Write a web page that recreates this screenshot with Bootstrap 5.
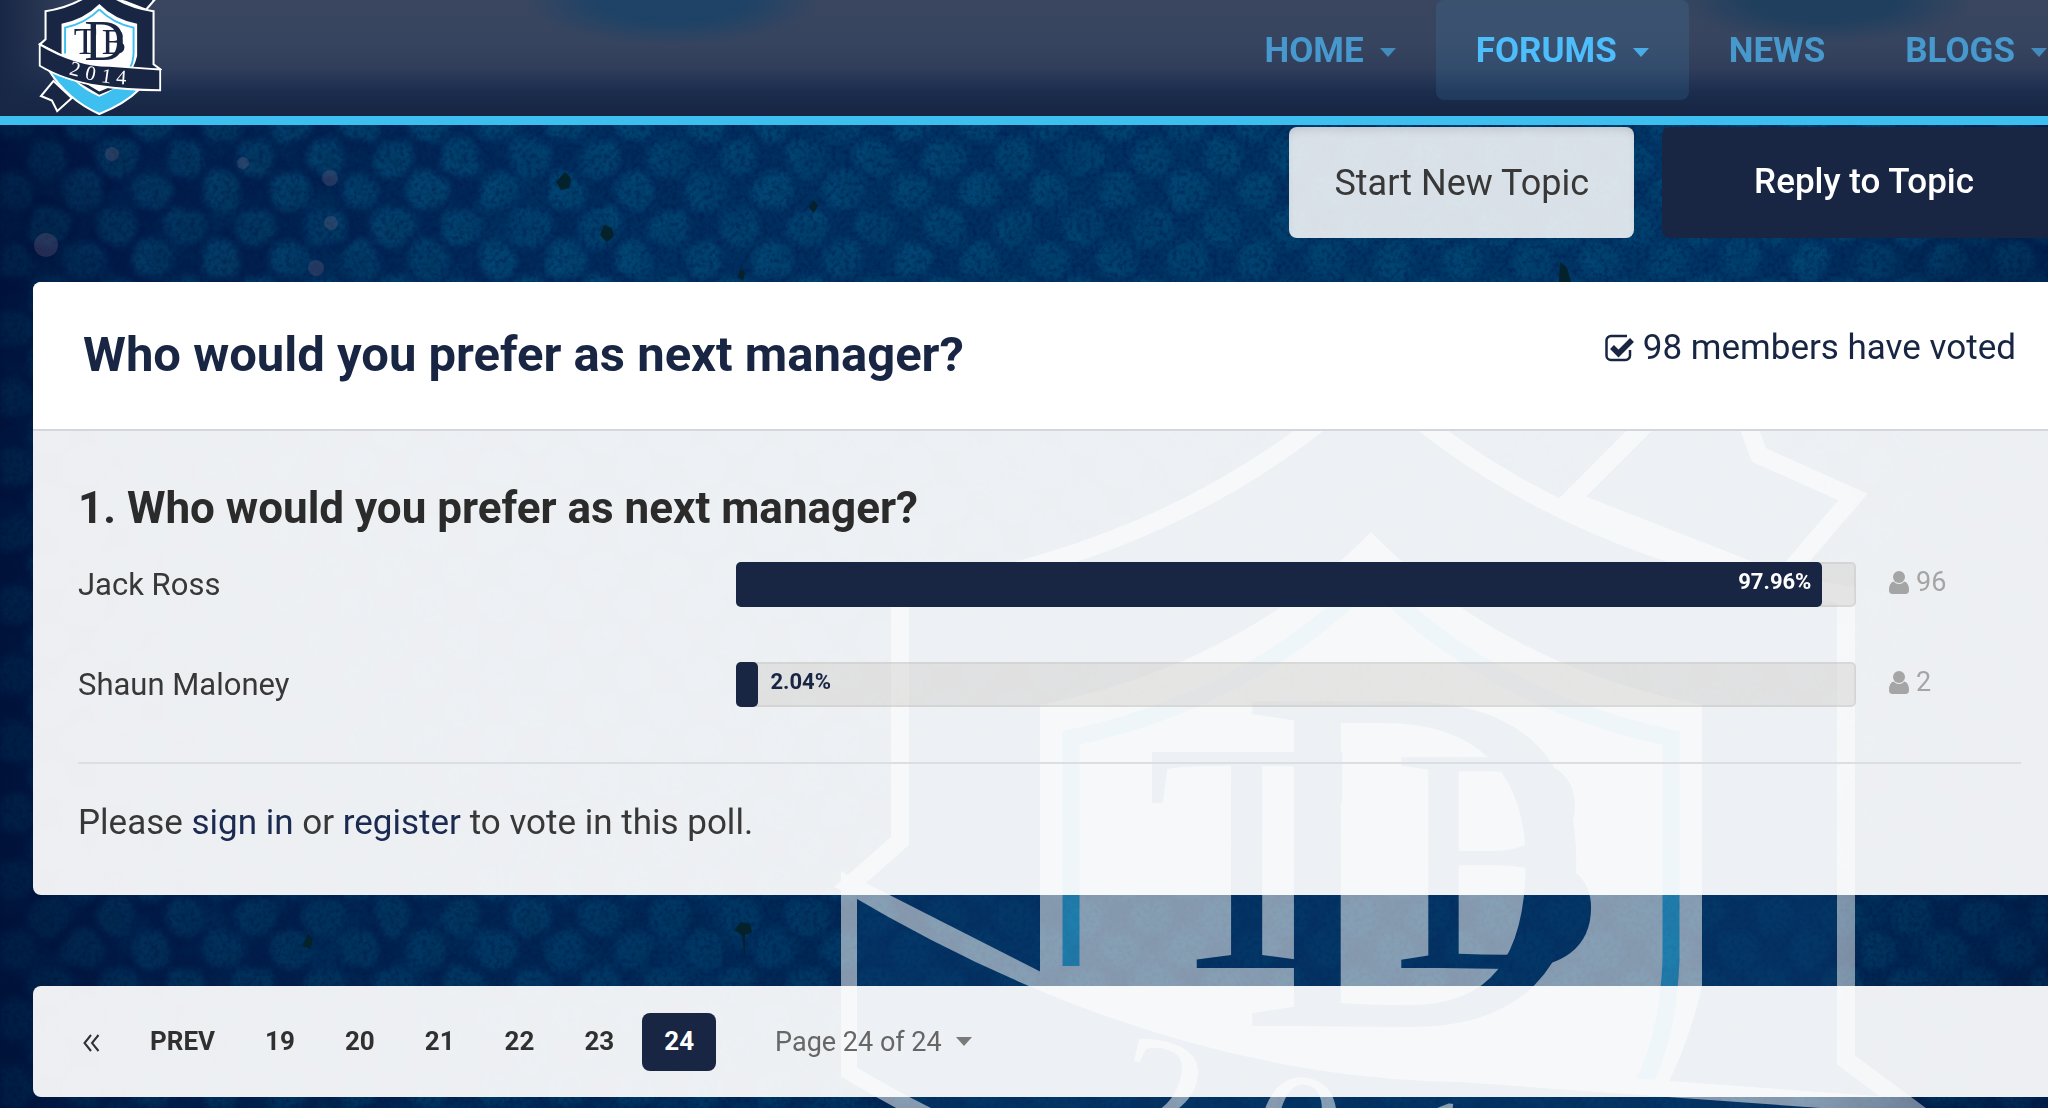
<!DOCTYPE html>
<html lang="en">
<head>
<meta charset="utf-8">
<meta name="viewport" content="width=device-width, initial-scale=1">
<title>Who would you prefer as next manager?</title>
<link href="https://cdn.jsdelivr.net/npm/bootstrap@5.3.0/dist/css/bootstrap.min.css" rel="stylesheet">
<style>
:root { --navy: #182643; --cyan: #3dbfef; --ink: #383838; }
body { font-family: Roboto, "Liberation Sans", sans-serif; font-size: 35px; line-height: 48px; color: var(--ink); background: #032a55; overflow-x: hidden; }
a { text-decoration: none; }
.backdrop { position: fixed; inset: 0; z-index: -1; }
.backdrop svg { width: 100%; height: 100%; display: block; }
.watermark { color: #07386c; }
/* the board is a little wider than the window */
.board { width: calc(100% + 51px); }
.site-head { height: 125px; border-bottom: 9px solid var(--cyan); padding: 0 12px 0 33px;
  background:
    radial-gradient(ellipse 150px 46px at 672px 0, rgba(24,66,104,.8) 50%, transparent),
    radial-gradient(ellipse 150px 44px at 1825px 0, rgba(26,62,94,.8) 50%, transparent),
    linear-gradient(90deg, #182746 0, rgba(24,39,70,0) 90px),
    linear-gradient(180deg, #3a465f 0, #37445f 45px, #303e5b 68px, #1b2c4d 92px, #172644 110px); }
.site-logo { width: 129px; height: 116px; display: block; color: var(--navy); }
.main-nav { font-weight: 700; }
.main-nav .nav-link { color: #4698cd; height: 100px; padding: 1px 40px 0; display: flex; align-items: center; gap: 16px; border-radius: 8px; }
.main-nav .nav-link.active { color: #4dbdfc; background: rgba(70,150,200,.16); }
.tri { width: 16px; height: 9px; fill: currentColor; flex: none; opacity: .85; }
.main-nav .tri { margin-top: 3px; }
.content-area { padding: 2px 33px 0; }
.act-row { gap: 28px; }
.act-btn { height: 111px; border-radius: 8px; border: 0; font-size: 35px; }
.act-light { font-size: 36px; background: rgba(255,255,255,.85); color: var(--ink); padding: 0 45px; box-shadow: inset 0 6px 12px -6px rgba(0,0,0,.2); }
.act-dark { background: var(--navy); color: #fff; font-weight: 500; padding: 0 92px; }
.act-light:hover { background: #fff; }
.act-dark:hover { background: #22365e; color: #fff; }
.panel { background: rgba(255,255,255,.93); border-radius: 8px; }
.poll-card { margin-top: 44px; }
.poll-head { background: #fff; border-radius: 8px 8px 0 0; border-bottom: 2px solid #d3d7db; height: 149px; padding: 42px 50px; color: var(--navy); }
.poll-head h1 { font-size: 49px; line-height: 62px; font-weight: 700; margin: 0; }
.poll-body { padding: 45px 45px 48px; }
.poll-body h2 { font-size: 44px; line-height: 64px; font-weight: 700; color: #2b2b2b; margin: 0 0 22px; }
.choice { display: grid; grid-template-columns: 658fr 1120fr 165fr; height: 45px; margin-bottom: 55px; font-size: 31px; line-height: 45px; }
.meter { height: 45px; border-radius: 5px; background: rgba(212,210,208,.5); box-shadow: inset 0 0 0 2px rgba(0,0,0,.05); font-size: 22px; line-height: 39px; font-weight: 700; color: var(--navy); }
.meter-fill { background: var(--navy); border-radius: 5px; color: #fff; text-align: right; }
.meter-text { padding-right: 11px; }
.votes { color: #a5a5a5; font-size: 27px; height: 40px; line-height: 40px; padding-left: 33px; gap: 7px; }
.votes svg { width: 20px; height: 23px; fill: currentColor; }
.rule { border: 0; border-top: 2px solid #dcdfe1; opacity: 1; margin: 0 0 35px; }
.poll-body a, .poll-body a:hover { color: #1b2a50; }
.pager { margin: 91px 0 0; height: 111px; padding: 0 28px; gap: 7px; }
.pager .page-link { font-size: 26px; font-weight: 700; background: none; border: 0; border-radius: 8px; color: #303030; height: 58px; line-height: 56px; padding: 0 22px; }
.pager .page-item.active .page-link { background: var(--navy); color: #fff; }
.pager .page-jump { font-size: 27px; color: #666; background: none; border: 0; padding: 0; margin-left: 52px; gap: 14px; }
</style>
</head>
<body>
<div class="backdrop" aria-hidden="true">
<svg>
  <defs>
    <pattern id="dots" width="69" height="69" patternUnits="userSpaceOnUse" patternTransform="translate(14 2)">
      <g fill="#034673">
        <circle cx="34" cy="17" r="20"/><circle cx="0" cy="51" r="20"/><circle cx="69" cy="51" r="20"/>
      </g>
      <g fill="#03395f" opacity=".6"><circle cx="37" cy="20" r="11"/><circle cx="3" cy="54" r="10"/></g>
    </pattern>
    <filter id="rough" x="0" y="0" width="100%" height="100%" color-interpolation-filters="sRGB">
      <feTurbulence type="fractalNoise" baseFrequency=".03" numOctaves="3" seed="4" result="n"/>
      <feDisplacementMap in="SourceGraphic" in2="n" scale="14" xChannelSelector="R" yChannelSelector="G" result="d"/>
      <feGaussianBlur in="d" stdDeviation="3"/>
    </filter>
    <filter id="grain" x="0" y="0" width="100%" height="100%">
      <feTurbulence type="fractalNoise" baseFrequency=".22" numOctaves="3" seed="9"/>
      <feColorMatrix values="0 0 0 0 0  0 0 0 0 .01  0 0 0 0 .08  2.8 0 0 0 -1.2"/>
    </filter>
    <filter id="clouds" x="0" y="0" width="100%" height="100%">
      <feTurbulence type="fractalNoise" baseFrequency=".02" numOctaves="3" seed="21"/>
      <feColorMatrix values="0 0 0 0 0  0 0 0 0 .04  0 0 0 0 .13  0 3 0 0 -1.25"/>
    </filter>
    <linearGradient id="edge"><stop offset="0" stop-color="#000d30" stop-opacity=".65"/><stop offset=".07" stop-color="#000d30" stop-opacity=".25"/><stop offset=".25" stop-color="#00122e" stop-opacity="0"/><stop offset=".88" stop-color="#00122e" stop-opacity="0"/><stop offset="1" stop-color="#000d30" stop-opacity=".35"/></linearGradient>
    <linearGradient id="wash"><stop offset="0" stop-color="#004370" stop-opacity="0"/><stop offset=".35" stop-color="#004370" stop-opacity=".45"/><stop offset=".8" stop-color="#004370" stop-opacity=".65"/><stop offset="1" stop-color="#004370" stop-opacity=".3"/></linearGradient>
    <linearGradient id="low" x2="0" y2="1"><stop offset=".3" stop-color="#001a40" stop-opacity="0"/><stop offset=".8" stop-color="#001a40" stop-opacity=".3"/></linearGradient>

    <symbol id="crest" viewBox="790 497 1130 1015" overflow="visible">
      <g stroke="#fff" stroke-width="18" stroke-linejoin="miter" fill="currentColor">
        <path d="M970 1205 860 1338 956 1378 1002 1470 1130 1355Z"/>
        <path d="M1570 500 1720 350 1759 455 1853 497 1780 582Z"/>
        <path d="M1371 378Q1190 550 900 595V841L850 885 1371 1150 1904 1103 1846 1060V595Q1552 550 1371 378Z"/>
      </g>
      <path d="M928 1110Q1090 1370 1371 1495 1600 1400 1715 1284Z" fill="#3dbfef" stroke="#fff" stroke-width="18"/>
      <path d="M1371 532Q1240 665 1040 705V1000Q1090 1220 1371 1345 1650 1220 1702 986V705Q1500 665 1371 532Z" fill="#fff"/>
      <path d="M1190 1205 1371 1312 1545 1240" fill="none" stroke="currentColor" stroke-width="24"/>
      <path d="M1371 578Q1250 700 1071 738V966M1371 578Q1490 700 1671 738V960Q1668 1040 1640 1090" fill="none" stroke="#3dbfef" stroke-width="17"/>
      <g fill="currentColor" font-family="'Liberation Serif', serif">
        <text x="1146" y="968" font-size="330">T</text>
        <text x="1238" y="1026" font-size="496">D</text>
        <text x="1392" y="968" font-size="322">B</text>
      </g>
      <path d="M849 885Q1160 1070 1460 1074L1904 1106V1287Q1600 1285 1371 1250 1060 1200 849 1072Z" fill="currentColor" stroke="#fff" stroke-width="16"/>
      <text fill="#fff" font-family="'Liberation Serif', serif" font-size="180" x="1100 1240 1382 1515" y="1148 1186 1214 1230" rotate="14 12 8 4">2014</text>
    </symbol>
  </defs>
  <rect width="100%" height="100%" fill="#021c4e"/>
  <rect width="100%" height="100%" fill="url(#dots)" filter="url(#rough)"/>
  <rect width="100%" height="100%" fill="url(#wash)"/>
  <rect width="100%" height="100%" fill="url(#low)"/>
  <rect width="100%" height="100%" filter="url(#clouds)" opacity=".6"/>
  <rect width="100%" height="100%" filter="url(#grain)" opacity=".5"/>
  <use class="watermark" href="#crest" x="790" y="497" width="1130" height="1015" opacity=".52"/>
  <rect width="100%" height="100%" fill="url(#edge)"/>
  <g fill="#04222c"><path d="M565 172l6 6-2 10-8 2-5-8zM604 225l8 3 2 8-7 6-7-7zM813 200l5 5-4 8-5-5zM740 268l5 4-2 9-5-4zM1560 262l7 6 4 14h-12zM308 934l5 5-3 10-8-3zM741 922l9 2 2 8-7 3v24l-3-24-8-5z"/></g>
  <g fill="#74607e" opacity=".3"><circle cx="46" cy="245" r="12"/><circle cx="112" cy="154" r="7"/><circle cx="330" cy="178" r="8"/><circle cx="331" cy="223" r="7"/><circle cx="243" cy="163" r="6"/><circle cx="316" cy="268" r="8"/></g>
</svg>
</div>

<div class="board">
  <header class="site-head d-flex justify-content-between">
    <a href="#" aria-label="TDB 2014 home"><svg class="site-logo" viewBox="0 0 129 116"><use href="#crest" width="129" height="116"/></svg></a>
    <nav class="nav main-nav flex-nowrap" aria-label="Main">
      <a class="nav-link" href="#">HOME <svg class="tri" viewBox="0 0 16 9"><path d="M0 0h16L8 9z"/></svg></a>
      <a class="nav-link active" aria-current="page" href="#">FORUMS <svg class="tri" viewBox="0 0 16 9"><path d="M0 0h16L8 9z"/></svg></a>
      <a class="nav-link" href="#">NEWS</a>
      <a class="nav-link" href="#">BLOGS <svg class="tri" viewBox="0 0 16 9"><path d="M0 0h16L8 9z"/></svg></a>
    </nav>
  </header>

  <main class="content-area">
    <div class="act-row d-flex justify-content-end">
      <button type="button" class="btn act-btn act-light">Start New Topic</button>
      <button type="button" class="btn act-btn act-dark">Reply to Topic</button>
    </div>

    <section class="panel poll-card">
      <div class="poll-head d-flex justify-content-between align-items-start">
        <h1>Who would you prefer as next manager?</h1>
        <div class="d-flex align-items-center gap-2">
          <svg width="30" height="28" viewBox="0 0 30 28"><path d="M22 2H6a4.500 4.500 0 0 0-4.500 4.500v15A4.500 4.500 0 0 0 6 26h14.500a4.500 4.500 0 0 0 4.500-4.500V16" fill="none" stroke="currentColor" stroke-width="2.500"/><path d="M7 13l6.500 6.500L27 6" fill="none" stroke="currentColor" stroke-width="5.500"/></svg>
          <span>98 members have voted</span>
        </div>
      </div>
      <div class="poll-body">
        <h2>1. Who would you prefer as next manager?</h2>
        <div class="choice">
          <div>Jack Ross</div>
          <div class="meter d-flex"><div class="meter-fill meter-text" style="width:97%">97.96%</div></div>
          <div class="votes d-flex align-items-center"><svg viewBox="0 0 20 23"><circle cx="10" cy="6" r="6"/><path d="M4.500 10.500Q10 15.500 15.500 10.500 20 12 20 19 20 23 16.500 23h-13Q0 23 0 19 0 12 4.500 10.500z"/></svg>96</div>
        </div>
        <div class="choice">
          <div>Shaun Maloney</div>
          <div class="meter d-flex"><div class="meter-fill me-2" style="width:2%"></div><span class="ps-1">2.04%</span></div>
          <div class="votes d-flex align-items-center"><svg viewBox="0 0 20 23"><circle cx="10" cy="6" r="6"/><path d="M4.500 10.500Q10 15.500 15.500 10.500 20 12 20 19 20 23 16.500 23h-13Q0 23 0 19 0 12 4.500 10.500z"/></svg>2</div>
        </div>
        <hr class="rule">
        <p class="mb-0">Please <a href="#">sign in</a> or <a href="#">register</a> to vote in this poll.</p>
      </div>
    </section>

    <nav aria-label="Topic pages">
      <ul class="pagination pager panel align-items-center">
        <li class="page-item"><a class="page-link" href="#" aria-label="First page"><svg width="17" height="18" viewBox="0 0 17 18" fill="none" stroke="currentColor" stroke-width="2"><path d="M8 1 1.500 9 8 17M15.500 1 9 9l6.500 8"/></svg></a></li>
        <li class="page-item"><a class="page-link" href="#">PREV</a></li>
        <li class="page-item"><a class="page-link" href="#">19</a></li>
        <li class="page-item"><a class="page-link" href="#">20</a></li>
        <li class="page-item"><a class="page-link" href="#">21</a></li>
        <li class="page-item"><a class="page-link" href="#">22</a></li>
        <li class="page-item"><a class="page-link" href="#">23</a></li>
        <li class="page-item active" aria-current="page"><a class="page-link" href="#">24</a></li>
        <li><button type="button" class="page-jump d-flex align-items-center">Page 24 of 24 <svg class="tri" viewBox="0 0 16 9"><path d="M0 0h16L8 9z"/></svg></button></li>
      </ul>
    </nav>
  </main>
</div>
<script src="https://cdn.jsdelivr.net/npm/bootstrap@5.3.0/dist/js/bootstrap.bundle.min.js"></script>
</body>
</html>
